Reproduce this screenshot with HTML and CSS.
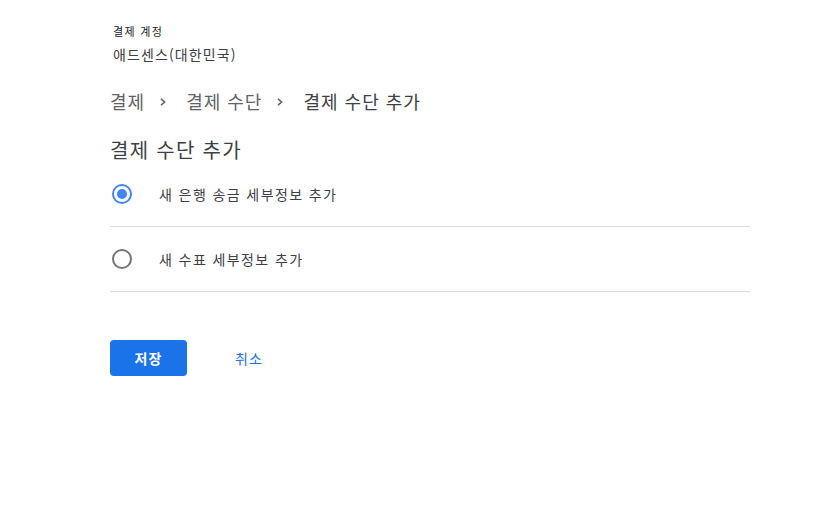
FILE: index.html
```html
<!DOCTYPE html>
<html lang="ko">
<head>
<meta charset="utf-8">
<link rel="stylesheet" href="styles.css">
</head>
<body>
<main class="page">
  <div class="account">
    <div class="account-label">결제 계정</div>
    <div class="account-name">애드센스(대한민국)</div>
  </div>
  <nav class="crumbs">
    <span class="crumb">결제</span>
    <svg class="sep" width="6" height="8" viewBox="0 0 6 8"><path d="M1 0.8 L4.6 4 L1 7.2" fill="none" stroke="#5f6368" stroke-width="1.6"/></svg>
    <span class="crumb">결제 수단</span>
    <svg class="sep" width="6" height="8" viewBox="0 0 6 8"><path d="M1 0.8 L4.6 4 L1 7.2" fill="none" stroke="#5f6368" stroke-width="1.6"/></svg>
    <span class="crumb current">결제 수단 추가</span>
  </nav>
  <h1 class="title">결제 수단 추가</h1>
  <div class="options">
    <label class="option">
      <span class="radio checked"><span class="dot"></span></span>
      <span class="option-text">새 은행 송금 세부정보 추가</span>
    </label>
    <label class="option">
      <span class="radio"></span>
      <span class="option-text">새 수표 세부정보 추가</span>
    </label>
  </div>
  <div class="actions">
    <button class="btn-primary">저장</button>
    <button class="btn-text">취소</button>
  </div>
</main>
</body>
</html>
```
FILE: styles.css
```css
html, body {
  margin: 0;
  padding: 0;
  background: #ffffff;
}
body {
  font-family: "Noto Sans CJK KR", Roboto, sans-serif;
  color: #202124;
}
.page {
  width: 640px;
  padding: 23px 0 0 110px;
}
.account {
  padding-left: 3px;
}
.account-label {
  font-size: 11px;
  line-height: 16px;
  letter-spacing: 1.3px;
  color: #202124;
}
.account-name {
  font-size: 14px;
  line-height: 20px;
  margin-top: 5px;
  letter-spacing: 1.1px;
  color: #3c4043;
}
.crumbs {
  display: flex;
  align-items: center;
  margin-top: 24px;
  font-size: 18px;
  line-height: 26px;
  letter-spacing: 1px;
  color: #5f6368;
}
.sep {
  margin: 2px 20px 0 15px;
  flex: none;
}
.crumb.current {
  color: #3c4043;
}
.title {
  margin: 25px 0 0 0;
  font-size: 20px;
  line-height: 22px;
  font-weight: 400;
  letter-spacing: 1.3px;
  color: #3c4043;
}
.options {
  margin-top: 1px;
}
.option {
  display: flex;
  align-items: center;
  height: 65px;
  border-bottom: 1px solid #dadce0;
  box-sizing: border-box;
}
.radio {
  width: 20px;
  height: 20px;
  box-sizing: border-box;
  border: 2px solid #757575;
  border-radius: 50%;
  margin-left: 2px;
  display: flex;
  align-items: center;
  justify-content: center;
  flex: none;
}
.radio.checked {
  border-color: #4285f4;
}
.dot {
  width: 10px;
  height: 10px;
  border-radius: 50%;
  background: #4285f4;
}
.option-text {
  margin-left: 27px;
  font-size: 14px;
  letter-spacing: 1.4px;
  color: #3c4043;
}
.actions {
  display: flex;
  align-items: center;
  margin-top: 48px;
}
.btn-primary {
  width: 77px;
  height: 36px;
  border: none;
  border-radius: 4px;
  background: #1a73e8;
  color: #ffffff;
  font-family: "Noto Sans CJK KR", Roboto, sans-serif;
  font-size: 14px;
  font-weight: 700;
  letter-spacing: 1px;
  cursor: pointer;
}
.btn-text {
  margin-left: 38px;
  border: none;
  background: none;
  padding: 8px 10px;
  color: #1a73e8;
  font-family: "Noto Sans CJK KR", Roboto, sans-serif;
  font-size: 14px;
  letter-spacing: 1px;
  cursor: pointer;
}
```
